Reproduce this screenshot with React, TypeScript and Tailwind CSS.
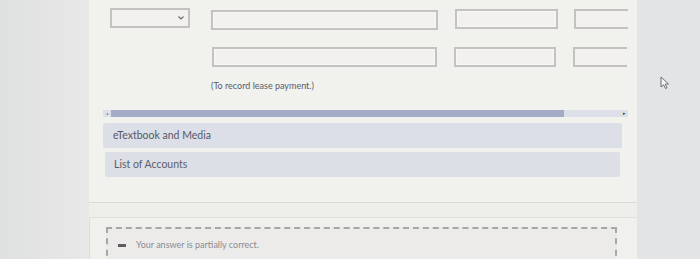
import React from "react";

function Field({ w, open = false }: { w: string; open?: boolean }) {
  return (
    <div
      className={`h-[20px] ${w} border-2 border-[#c6c1c1] bg-[#f2f1ef] ${
        open ? "border-r-0" : "shadow-[inset_0_0_0_1px_#f7f7f6]"
      }`}
    />
  );
}

function Cursor() {
  return (
    <svg width="12" height="14" viewBox="0 0 12 14" className="ml-[22px] mt-[76px]">
      <path d="M2 1 L2 11 L4.5 8.8 L6.5 12.5 L8 11.8 L6.2 8.2 L9.5 8 Z" fill="#f4f4f4" stroke="#6d6f75" strokeWidth="1" />
    </svg>
  );
}

export default function App() {
  return (
    <div
      className="flex h-[259px] w-[700px] overflow-hidden bg-[#e4e6e5]"
      style={{ fontFamily: "Lato, 'Open Sans', sans-serif" }}
    >
      <div className="w-[89px] shrink-0 bg-gradient-to-r from-[#dfe1e0] to-[#e7e8e7]" />

      <div className="flex w-[548px] shrink-0 flex-col bg-[#eeeeeb]">
        <div className="h-[203px] shrink-0 border-b border-[#d9dad8] bg-[#f1f1ee] pl-[14px] pr-[8px]">
          <div className="flex items-start pt-[8px] pl-[7px]">
            <div className="flex h-[20px] w-[80px] items-center justify-end border-2 border-[#c6c1c1] bg-[#f2f1ef] pr-[4px]">
              <svg width="6" height="4" viewBox="0 0 6 4">
                <path d="M0.5 0.5 L3 3 L5.5 0.5" fill="none" stroke="#6a6d75" strokeWidth="1.2" />
              </svg>
            </div>
            <div className="ml-[21px] mt-[2px]">
              <Field w="w-[227px]" />
            </div>
            <div className="ml-[17px] mt-[1px]">
              <Field w="w-[103px]" />
            </div>
            <div className="ml-[16px] mt-[1px]">
              <Field w="w-[54px]" open />
            </div>
          </div>

          <div className="flex items-start pt-[17px] pl-[109px]">
            <Field w="w-[225px]" />
            <div className="ml-[17px]">
              <Field w="w-[102px]" />
            </div>
            <div className="ml-[17px]">
              <Field w="w-[54px]" open />
            </div>
          </div>

          <p className="mt-[13px] pl-[108px] text-[9px] leading-[12px] text-[#575c6c]">(To record lease payment.)</p>

          <div className="mt-[18px] flex h-[7px] w-[525px] items-center bg-[#dde0e9]">
            <span className="w-[8px] text-center text-[4px] leading-none text-[#6b6f80]">◂</span>
            <div className="h-full w-[453px] bg-[#a4abc6]" />
            <div className="flex-1" />
            <span className="w-[8px] text-center text-[5px] leading-none text-[#3f4250]">▸</span>
          </div>

          <div className="mt-[6px] flex h-[25px] w-[519px] items-center rounded-[2px] bg-[#dcdfe7] pl-[10px] text-[10.5px] text-[#555866]">
            eTextbook and Media
          </div>
          <div className="ml-[2px] mt-[4px] flex h-[25px] w-[515px] items-center rounded-[2px] bg-[#dcdfe6] pl-[9px] text-[10.5px] text-[#5b5e6b]">
            List of Accounts
          </div>
        </div>

        <div className="mt-[14px] flex-1 border-l border-t border-[#dedfdc] bg-[#f0f0ec] pl-[16px] pr-[20px] pt-[9px]">
          <div className="flex h-[40px] items-start border-2 border-b-0 border-dashed border-[#a7a6a8] bg-[#ecebea] pl-[10px] pt-[10px]">
            <div className="mt-[5px] h-[3px] w-[8px] bg-[#5b5d63]" />
            <p className="ml-[10px] text-[9px] leading-[12px] text-[#8a8c92]">Your answer is partially correct.</p>
          </div>
        </div>
      </div>

      <div className="flex-1 bg-[#e3e4e6]">
        <Cursor />
      </div>
    </div>
  );
}
